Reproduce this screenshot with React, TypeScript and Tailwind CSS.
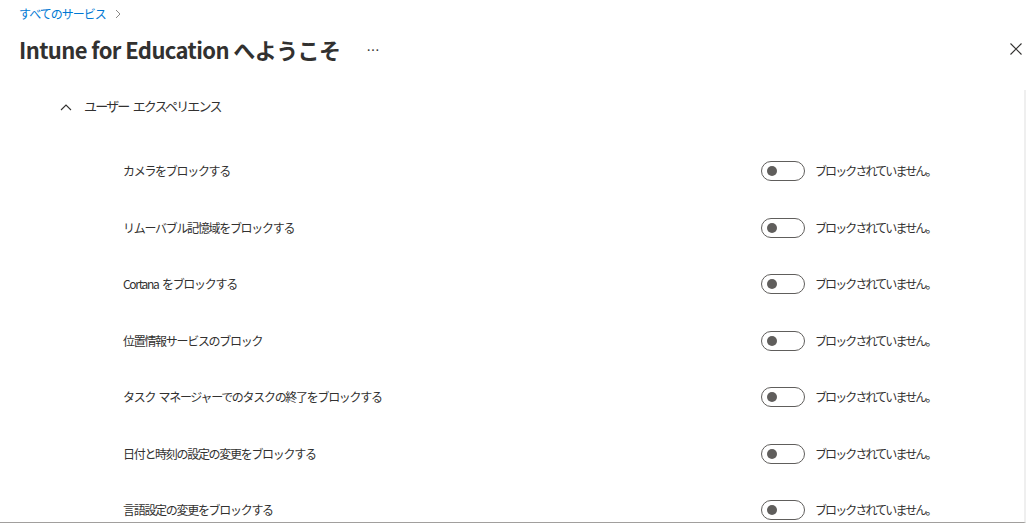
import React from 'react';

const settings: string[] = [
    'カメラをブロックする',
    'リムーバブル記憶域をブロックする',
    'Cortana をブロックする',
    '位置情報サービスのブロック',
    'タスク マネージャーでのタスクの終了をブロックする',
    '日付と時刻の設定の変更をブロックする',
    '言語設定の変更をブロックする',
];

const jp = { fontFamily: '"Segoe UI", "Noto Sans CJK JP", "Noto Sans", sans-serif' };

const Toggle = () => (
    <div className="w-[44px] h-[20px] rounded-full border border-[#605e5c] flex items-center pl-[5px] bg-white">
        <div className="w-[10px] h-[10px] rounded-full bg-[#605e5c]" />
    </div>
);

const App = () => {
    return (
        <div className="w-[1027px] h-[525px] bg-white text-[#323130] overflow-hidden flex flex-col" style={jp}>
            <div className="h-[90px] shrink-0 pl-[19px] pr-[3px]">
                <div className="pt-[6px] h-[22px] flex items-center gap-[6px] text-[12px] tracking-[-1px]">
                    <span className="text-[#0078d4]">すべてのサービス</span>
                    <svg width="8" height="10" viewBox="0 0 8 10" className="ml-[2px]">
                        <path d="M2 1 L6 5 L2 9" fill="none" stroke="#8a8886" strokeWidth="1" />
                    </svg>
                </div>
                <div className="mt-[12px] h-[30px] flex items-center">
                    <h1 className="text-[22px] font-semibold tracking-[-0.6px] leading-none">Intune for Education へようこそ</h1>
                    <span className="ml-[26px] text-[13px] text-[#323130] leading-none">…</span>
                    <div className="flex-1" />
                    <svg width="12" height="12" viewBox="0 0 12 12" className="mr-[2px]">
                        <path d="M0.5 0.5 L11.5 11.5 M11.5 0.5 L0.5 11.5" stroke="#323130" strokeWidth="1.1" />
                    </svg>
                </div>
            </div>
            <div className="flex-1 border-r-2 border-r-[#efefef] border-b border-b-[#a19f9d] mr-[1px] mb-[2px] overflow-hidden">
                <div className="h-[26px] flex items-end pl-[60px] text-[13px] tracking-[-1.8px] [word-spacing:3px]">
                    <svg width="12" height="8" viewBox="0 0 12 8" className="mb-[5px]">
                        <path d="M1 7 L6 2 L11 7" fill="none" stroke="#323130" strokeWidth="1.1" />
                    </svg>
                    <span className="ml-[12px] leading-[20px]">ユーザー エクスペリエンス</span>
                </div>
                <div className="mt-[27px]">
                    {settings.map((s) => (
                        <div key={s} className="h-[56.5px] flex items-center pl-[123px] text-[12px] tracking-[-1.3px] [word-spacing:2px]">
                            <span className="w-[638px] shrink-0">{s}</span>
                            <Toggle />
                            <span className="ml-[10px] tracking-[-1.9px]">ブロックされていません。</span>
                        </div>
                    ))}
                </div>
            </div>
        </div>
    );
};

export default App;
